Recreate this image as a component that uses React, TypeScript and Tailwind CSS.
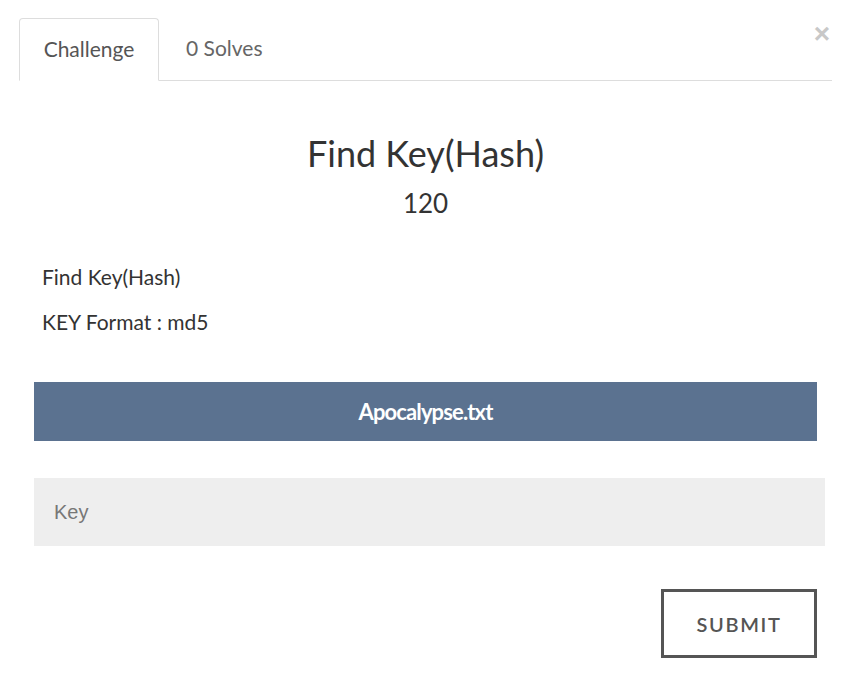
import React from 'react'

export default function App() {
  return (
    <div className="relative w-[846px] h-[674px] bg-white font-['Lato',sans-serif] text-[#333]">
      {/* Close */}
      <button className="absolute right-[16px] top-[20px] text-[28px] font-bold leading-none text-[#c8c8c8] font-['Liberation_Sans',sans-serif]">
        ×
      </button>

      {/* Tabs */}
      <div className="pt-[18px] pl-[19px] pr-[14px]">
        <div className="flex border-b border-[#dddddd]">
          <div className="h-[63px] w-[140px] -mb-px flex items-center justify-center rounded-t-[4px] border border-[#dddddd] border-b-white bg-white text-[21px] text-[#555] pb-[2px]">
            Challenge
          </div>
          <div className="h-[62px] pl-[27px] flex items-center text-[21px] text-[#666] pb-[2px]">
            0 Solves
          </div>
        </div>
      </div>

      {/* Body */}
      <div className="pl-[34px] pr-[29px]">
        <h3 className="mt-[52px] text-center text-[36px] leading-[40px] text-[#333]">Find Key(Hash)</h3>
        <div className="mt-[15px] text-center text-[26px] leading-[30px] text-[#333]">120</div>

        <div className="mt-[46px] pl-[8px] text-[21px] leading-[26px] text-[#333]">
          <p>Find Key(Hash)</p>
          <p className="mt-[19px]">KEY Format : md5</p>
        </div>

        <div className="mt-[47px] h-[59px] bg-[#5b7290] flex items-center justify-center text-white text-[22px] font-bold tracking-[-0.04em]">
          Apocalypse.txt
        </div>

        <input
          placeholder="Key"
          className="mt-[37px] block w-[791px] h-[68px] bg-[#eeeeee] px-[20px] text-[20px] font-['Liberation_Sans',sans-serif] text-[#555] placeholder:text-[#777] outline-none"
        />

        <div className="mt-[43px] flex justify-end">
          <button className="w-[156px] h-[69px] border-[3px] border-[#555] text-[20px] font-semibold tracking-[0.08em] text-[#555]">
            SUBMIT
          </button>
        </div>
      </div>
    </div>
  )
}
